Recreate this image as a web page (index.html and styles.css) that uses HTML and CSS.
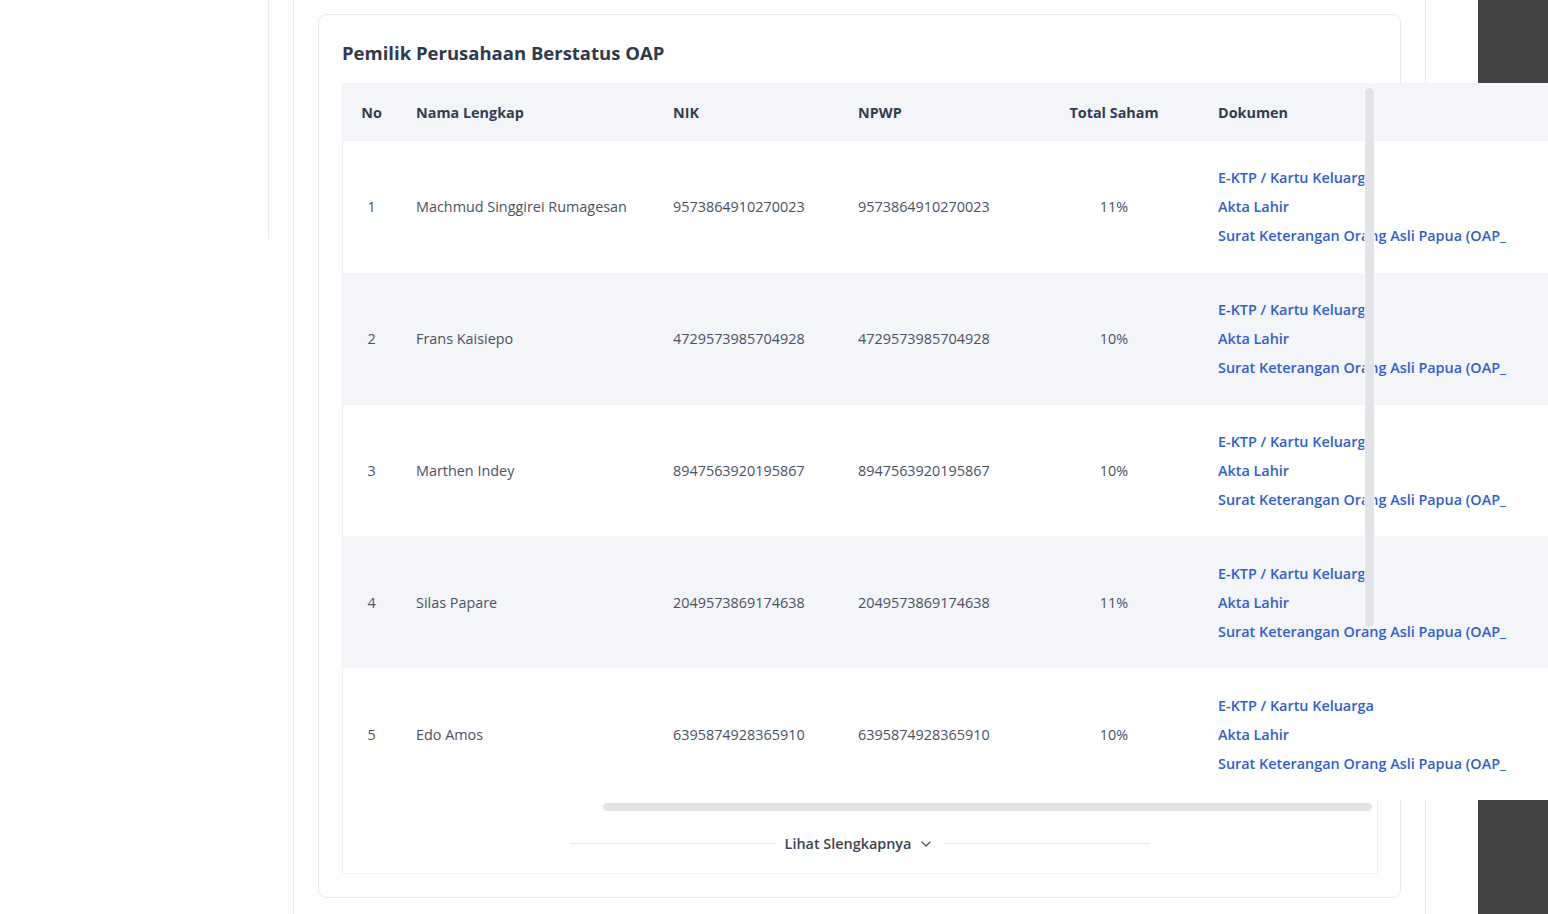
FILE: index.html
```html
<!DOCTYPE html>
<html lang="id">
<head>
<meta charset="utf-8">
<title>Pemilik Perusahaan Berstatus OAP</title>
<link rel="stylesheet" href="styles.css">
</head>
<body>
<div class="app">
  <aside class="sidebar"><div class="sidebar-box"></div></aside>
  <main class="main">
    <section class="card">
      <h2 class="card-title">Pemilik Perusahaan Berstatus OAP</h2>
      <div class="table-box">
        <div class="table-scroll">
          <table class="owners">
            <colgroup>
              <col class="c-no"><col class="c-name"><col class="c-nik"><col class="c-npwp"><col class="c-total"><col class="c-doc">
            </colgroup>
            <thead>
              <tr>
                <th class="center">No</th>
                <th>Nama Lengkap</th>
                <th>NIK</th>
                <th>NPWP</th>
                <th class="center">Total Saham</th>
                <th class="doc">Dokumen</th>
              </tr>
            </thead>
            <tbody>
              <tr>
                <td class="center">1</td>
                <td>Machmud Singgirei Rumagesan</td>
                <td>9573864910270023</td>
                <td>9573864910270023</td>
                <td class="center">11%</td>
                <td class="doc"><a href="#">E-KTP / Kartu Keluarga</a><a href="#">Akta Lahir</a><a href="#">Surat Keterangan Orang Asli Papua (OAP_</a></td>
              </tr>
              <tr class="alt">
                <td class="center">2</td>
                <td>Frans Kaisiepo</td>
                <td>4729573985704928</td>
                <td>4729573985704928</td>
                <td class="center">10%</td>
                <td class="doc"><a href="#">E-KTP / Kartu Keluarga</a><a href="#">Akta Lahir</a><a href="#">Surat Keterangan Orang Asli Papua (OAP_</a></td>
              </tr>
              <tr>
                <td class="center">3</td>
                <td>Marthen Indey</td>
                <td>8947563920195867</td>
                <td>8947563920195867</td>
                <td class="center">10%</td>
                <td class="doc"><a href="#">E-KTP / Kartu Keluarga</a><a href="#">Akta Lahir</a><a href="#">Surat Keterangan Orang Asli Papua (OAP_</a></td>
              </tr>
              <tr class="alt">
                <td class="center">4</td>
                <td>Silas Papare</td>
                <td>2049573869174638</td>
                <td>2049573869174638</td>
                <td class="center">11%</td>
                <td class="doc"><a href="#">E-KTP / Kartu Keluarga</a><a href="#">Akta Lahir</a><a href="#">Surat Keterangan Orang Asli Papua (OAP_</a></td>
              </tr>
              <tr>
                <td class="center">5</td>
                <td>Edo Amos</td>
                <td>6395874928365910</td>
                <td>6395874928365910</td>
                <td class="center">10%</td>
                <td class="doc"><a href="#">E-KTP / Kartu Keluarga</a><a href="#">Akta Lahir</a><a href="#">Surat Keterangan Orang Asli Papua (OAP_</a></td>
              </tr>
            </tbody>
          </table>
        </div>
        <div class="vbar"></div>
        <div class="hscroll"><div class="hthumb"></div></div>
        <div class="more">
          <span class="more-line"></span>
          <button class="more-btn" type="button">Lihat Slengkapnya
            <svg class="chev" width="10" height="6" viewBox="0 0 10 6" aria-hidden="true"><polyline points="1,1 5,5 9,1" fill="none" stroke="#4a5263" stroke-width="1.2" stroke-linecap="round" stroke-linejoin="round"/></svg>
          </button>
          <span class="more-line"></span>
        </div>
      </div>
    </section>
  </main>
  <div class="spacer"></div>
  <div class="dark"></div>
</div>
</body>
</html>
```

FILE: styles.css
```css
html, body {
  margin: 0;
  padding: 0;
  overflow: hidden;
  background: #ffffff;
}

body {
  font-family: "Open Sans", "Noto Sans", "Liberation Sans", sans-serif;
  color: #4a5263;
}

.app {
  display: flex;
  width: 1548px;
  height: 914px;
}

.sidebar {
  width: 269px;
  flex: 0 0 269px;
  margin-right: 24px;
}

.sidebar-box {
  height: 239px;
  border-right: 1px solid #ebebef;
}

.main {
  flex: 0 0 auto;
  width: 1133px;
  height: 914px;
  box-sizing: border-box;
  border-left: 1px solid #ebebef;
  border-right: 1px solid #ebebef;
  padding: 14px 24px 0 24px;
}

.card {
  box-sizing: border-box;
  width: 1083px;
  border: 1px solid #e8e9ed;
  border-radius: 8px;
  padding: 24px 22px 23px 23px;
  background: #ffffff;
}

.card-title {
  margin: 0 0 16px 0;
  font-size: 18.5px;
  line-height: 28px;
  font-weight: 700;
  color: #2f3a4b;
}

.table-box {
  position: relative;
  border: 1px solid #eef0f3;
  border-top: 0;
  border-radius: 0 0 3px 3px;
}

.table-scroll {
  position: relative;
  z-index: 1;
}

.owners {
  border-collapse: collapse;
  table-layout: fixed;
  width: 1217px;
  font-size: 14.4px;
}

.c-no { width: 57px; }
.c-name { width: 257px; }
.c-nik { width: 185px; }
.c-npwp { width: 188px; }
.c-total { width: 168px; }
.c-doc { width: 362px; }

.owners th {
  height: 58px;
  padding: 0 16px;
  text-align: left;
  font-weight: 700;
  color: #323d4f;
  background: #f4f5f9;
  white-space: nowrap;
}

.owners td {
  height: 131.8px;
  padding: 0 16px;
  text-align: left;
  vertical-align: middle;
  color: #4a5263;
  background: #ffffff;
  white-space: nowrap;
}

.owners tr.alt td {
  background: #f4f5f9;
}

.owners th.center,
.owners td.center {
  text-align: center;
}

.owners th.doc,
.owners td.doc {
  padding-left: 20px;
}

.owners td.doc a {
  display: block;
  line-height: 29px;
  font-weight: 600;
  color: #3060d0;
  text-decoration: none;
}

.vbar {
  position: absolute;
  z-index: 2;
  top: 5px;
  left: 1022px;
  width: 9px;
  height: 539px;
  border-radius: 5px;
  background: #e3e4e8;
  box-shadow: 0 0 0 1px rgba(255, 255, 255, 0.6);
}

.hscroll {
  height: 11px;
}

.hthumb {
  margin: 3px 0 0 260px;
  width: 769px;
  height: 8px;
  border-radius: 4px;
  background: #e3e4e8;
}

.more {
  display: flex;
  align-items: center;
  width: 580px;
  margin: 0 auto;
  padding: 18px 0 17px;
}

.more-line {
  flex: 1;
  height: 1px;
  background: #e4e6ea;
}

.more-btn {
  display: flex;
  align-items: center;
  gap: 10px;
  margin: 0 14px 0 10px;
  padding: 0;
  border: 0;
  background: transparent;
  font-family: inherit;
  font-size: 14.4px;
  line-height: 24px;
  font-weight: 600;
  color: #3b4455;
  cursor: pointer;
}

.chev {
  display: block;
}

.spacer {
  flex: 0 0 52px;
}

.dark {
  flex: 0 0 70px;
  height: 914px;
  background: #434343;
}
```
